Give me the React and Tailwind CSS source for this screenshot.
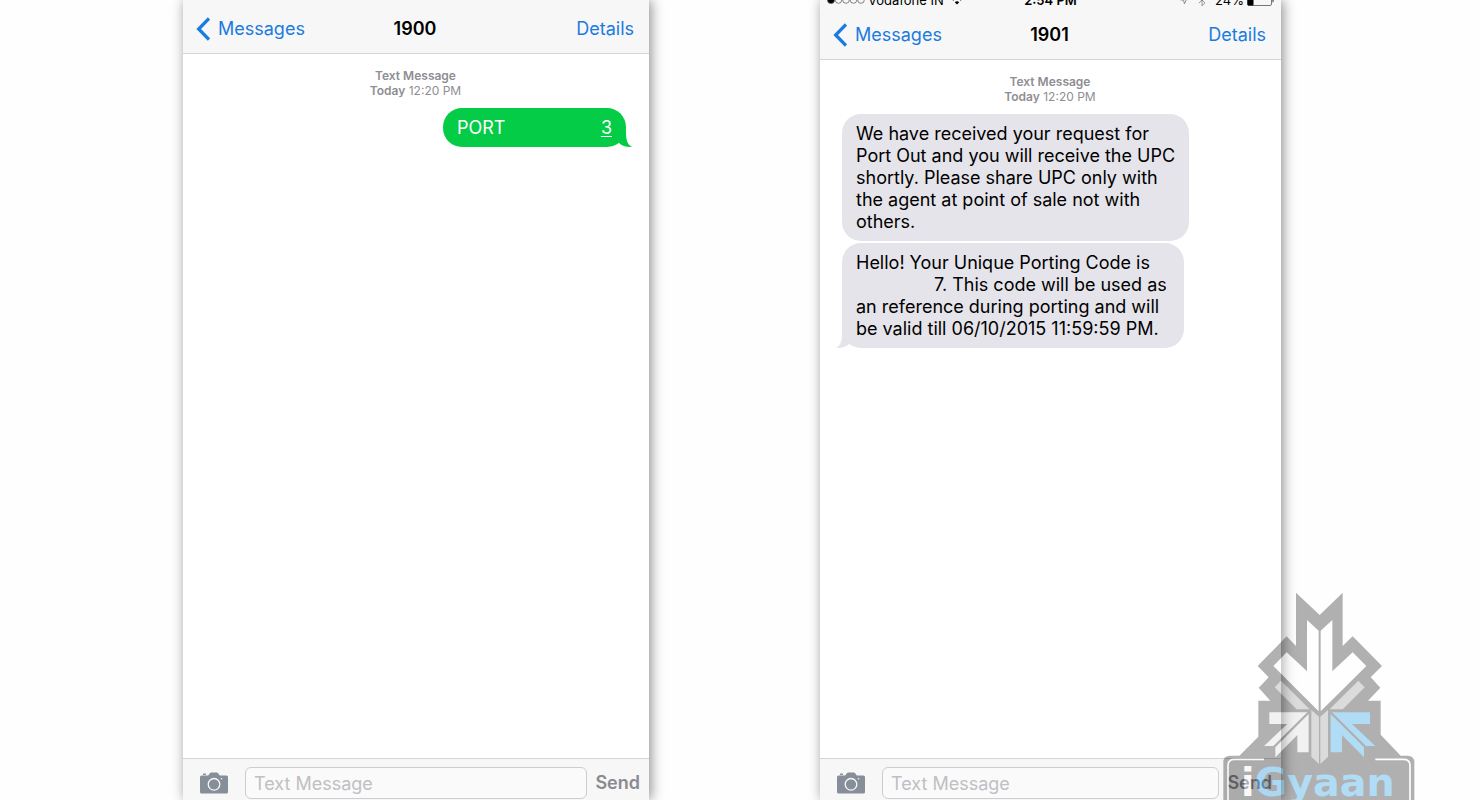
import { Bluetooth, Navigation } from 'lucide-react';

const phones = [
  {
    number: '1900',
    messages: [{ from: 'me', body: 'PORT', tail: true, digit: '3' }],
  },
  {
    number: '1901',
    statusBar: true,
    messages: [
      {
        from: 'them',
        width: 'max-w-[347px]',
        body: 'We have received your request for Port Out and you will receive the UPC shortly. Please share UPC only with the agent at point of sale not with others.',
      },
      {
        from: 'them',
        width: 'max-w-[342px]',
        tail: true,
        body: (
          <>
            Hello! Your Unique Porting Code is <span className="inline-block w-[78px]" />
            7. This code will be used as an reference during porting and will be valid till 06/10/2015 11:59:59 PM.
          </>
        ),
      },
    ],
  },
];

/* ── carrier, clock and battery ── */
const StatusBar = () => (
  <div className="-mt-[10px] grid h-5 grid-cols-[1fr_auto_1fr] items-center px-[7px] text-[13px] leading-5 text-black">
    <div className="flex items-center gap-[3px]">
      <svg className="h-2 w-[38px]" viewBox="0 0 38 8" fill="none" stroke="#555" strokeWidth="0.7">
        <circle cx="4" cy="4" r="3.5" fill="#000" />
        <circle cx="11.5" cy="4" r="3.3" />
        <circle cx="19" cy="4" r="3.3" />
        <circle cx="26.5" cy="4" r="3.3" />
        <circle cx="34" cy="4" r="3.3" />
      </svg>
      <span>Vodafone IN</span>
      <svg className="ml-[3px] h-[10px] w-[14px]" viewBox="0 0 14 10">
        <path d="M7 9.500L4.800 7.200Q7 5.500 9.200 7.200z" fill="#000" />
        <path d="M2.800 5.200Q7 1.800 11.200 5.200M0.800 3Q7 -2 13.200 3" fill="none" stroke="#000" strokeWidth="1.300" />
      </svg>
    </div>
    <span className="font-semibold">2:54 PM</span>
    <div className="flex items-center justify-end gap-[3px]">
      <Navigation size={10} className="text-[#777]" />
      <Bluetooth size={14} strokeWidth={1} className="ml-[3px] text-[#555]" />
      <span className="ml-[3px]">24%</span>
      <svg className="h-[11px] w-[27px]" viewBox="0 0 27 11">
        <rect x="0.5" y="0.5" width="24" height="10" rx="1.5" fill="none" stroke="#777" />
        <rect x="0.5" y="0.5" width="6" height="10" rx="1" fill="#000" />
        <path d="M25.500 3.500c1.500 0.500 1.500 3.500 0 4z" fill="#333" />
      </svg>
    </div>
  </div>
);

const NavBar = ({ title }) => (
  <nav className="grid h-[49px] grid-cols-[1fr_auto_1fr] items-center pr-[15px] pl-[13px] text-lg">
    <a href="#messages" className="flex items-center gap-2 text-[#1a7be0]">
      <svg className="h-6 w-[14px]" viewBox="0 0 14 24" fill="none" stroke="currentColor" strokeWidth="3.3">
        <path d="M13 1.500L2.700 12L13 22.500" />
      </svg>
      Messages
    </a>
    <h1 className="font-semibold text-black">{title}</h1>
    <a href="#details" className="justify-self-end text-[#1a7be0]">Details</a>
  </nav>
);

const Bubble = ({ from, body, digit, tail, width }) => {
  if (from === 'me') {
    return (
      <div className="relative flex w-[183px] justify-between self-end rounded-[19px] bg-[#04cc46] px-[14px] pt-[9px] pb-2 text-white">
        <span>{body}</span>
        <span className="underline decoration-1 underline-offset-2">{digit}</span>
        {tail && (
          <svg className="absolute -right-[6px] bottom-0 h-[18px] w-5" viewBox="0 0 20 18" fill="#04cc46">
            <path d="M14 0C13.800 9 14.500 15 20 18C15 18.200 10 17 7 14L0 10L8 0z" />
          </svg>
        )}
      </div>
    );
  }
  return (
    <div className={`relative w-full self-start rounded-[19px] bg-[#e5e4ea] pt-[9px] pr-3 pb-2 pl-[14px] text-black ${width}`}>
      {body}
      {tail && (
        <svg className="absolute -left-[6px] bottom-0 h-[18px] w-5" viewBox="0 0 20 18" fill="#e5e4ea">
          <path d="M6 0C6.200 9 5.500 15 0 18C5 18.200 10 17 13 14L20 10L12 0z" />
        </svg>
      )}
    </div>
  );
};

const Composer = () => (
  <form className="flex h-[42px] items-start border-t border-[#d4d4d6] bg-[#f7f7f7] pt-2 pr-[9px] pl-[17px] text-lg" onSubmit={(e) => e.preventDefault()}>
    <button type="button" aria-label="Camera" className="flex h-8 items-center">
      <svg className="h-[22px] w-7" viewBox="0 0 28 22">
        <path d="M1.500 3.500H8C9 3.300 9.500 0.500 11 0.500H17C18.500 0.500 19 3.300 20 3.500H26.500Q28 3.500 28 5V20Q28 21.500 26.500 21.500H1.500Q0 21.500 0 20V5Q0 3.500 1.500 3.500z" fill="#868e99" />
        <rect x="3" y="1.500" width="3" height="1.500" rx="0.500" fill="#868e99" />
        <circle cx="14" cy="12.300" r="5.800" fill="none" stroke="#f7f7f7" strokeWidth="1.300" />
        <circle cx="21.500" cy="6.800" r="0.800" fill="#f7f7f7" />
      </svg>
    </button>
    <input
      type="text"
      aria-label="Message"
      placeholder="Text Message"
      className="ml-[17px] h-8 min-w-0 flex-1 rounded-md border border-[#cdcdd0] bg-[#fafafa] px-2 outline-none placeholder:text-[#bfbfc4]"
    />
    <button type="submit" className="ml-2 h-8 font-semibold text-[#8a8a8f]">Send</button>
  </form>
);

const Phone = ({ number, statusBar, messages }) => (
  <section className="flex h-full min-w-0 flex-col bg-white shadow-[2px_0_12px_rgba(0,0,0,0.45)]">
    <header className="border-b border-[#d4d4d6] bg-[#f7f7f7]">
      {statusBar ? <StatusBar /> : <div className="h-1" />}
      <NavBar title={number} />
    </header>
    <div className="flex flex-1 flex-col pt-[14px] pr-[23px] pl-[22px] text-lg leading-[22px]">
      <p className="mb-[10px] text-center text-xs leading-[15px] text-[#8e8e93]">
        <span className="block font-semibold">Text Message</span>
        <span className="font-semibold">Today</span> 12:20 PM
      </p>
      <div className="flex flex-col gap-[2px]">
        {messages.map((m, i) => <Bubble key={i} {...m} />)}
      </div>
    </div>
    <Composer />
  </section>
);

/* ── translucent site badge over the corner ── */
const Watermark = () => (
  <svg className="pointer-events-none absolute right-[63px] bottom-0 h-[210px] w-[197px] opacity-30" viewBox="30 30 591 630">
    <path d="M258 38L329 105L398 38V198L428 169L516 258L482 292L511 323L474 362H512V464L572 527H593Q613 527 613 547V660H40V547Q40 527 60 527H88L145 470V362H181L146 323L176 292L143 258L230 169L258 198z" fill="#000" />
    <g fill="#fff">
      <path d="M291 120L326 152V394L190 258L230 217L291 274z" />
      <path d="M367 120L332 152V394L469 258L428 217L367 274z" />
    </g>
    <g fill="#8e8e8e">
      <path d="M194 322L213 302L299 388H260z" />
      <path d="M464 322L445 302L359 388H398z" />
      <path d="M304 390L327 410V552L304 530z" />
      <path d="M354 390L331 410V552L354 530z" />
    </g>
    <g fill="#d6d6d6">
      <path d="M178 397H292L190 498H162L232 432H178z" />
      <path d="M296 402V517H262V465L196 532V502z" />
    </g>
    <g fill="#0091e4">
      <path d="M480 397H366L468 498H496L426 432H480z" />
      <path d="M362 402V517H396V465L462 532V502z" />
    </g>
    <path d="M54 660V557Q54 538 73 538H162M496 538H581Q600 538 600 557V660" fill="none" stroke="#fff" strokeWidth="5" />
    <text x="93" y="648" fontSize="119" fontWeight="700" fontFamily="DejaVu Sans, sans-serif" fill="#0091e4">
      <tspan fill="#fff">i</tspan>Gyaan
    </text>
  </svg>
);

export default function App() {
  return (
    <main className="relative grid h-screen grid-cols-[183fr_466fr_171fr_461fr_199fr] overflow-hidden bg-[#fefefe] font-['Inter','Liberation_Sans',sans-serif]">
      <div />
      <Phone {...phones[0]} />
      <div />
      <Phone {...phones[1]} />
      <Watermark />
    </main>
  );
}
